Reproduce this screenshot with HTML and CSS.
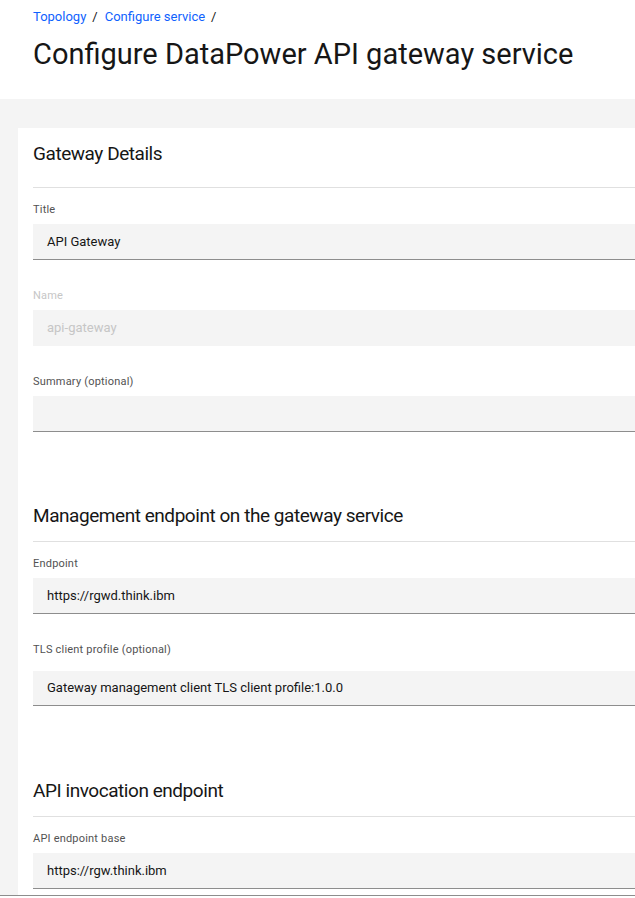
FILE: index.html
```html
<!DOCTYPE html>
<html lang="en">
<head>
<meta charset="utf-8">
<title>Configure DataPower API gateway service</title>
<link rel="stylesheet" href="styles.css">
</head>
<body>
<header class="page-header">
  <nav class="breadcrumb">
    <a class="crumb" href="#">Topology</a><span class="sep">/</span>
    <a class="crumb" href="#">Configure service</a><span class="sep">/</span>
  </nav>
  <h1 class="page-title">Configure DataPower API gateway service</h1>
</header>
<main class="content">
  <section class="card">
    <div class="section">
      <h2 class="section-title first">Gateway Details</h2>
      <div class="field">
        <label class="label">Title</label>
        <div class="input">API Gateway</div>
      </div>
      <div class="field">
        <label class="label disabled">Name</label>
        <div class="input disabled">api-gateway</div>
      </div>
      <div class="field">
        <label class="label">Summary (optional)</label>
        <div class="input"></div>
      </div>
    </div>
    <div class="section">
      <h2 class="section-title">Management endpoint on the gateway service</h2>
      <div class="field">
        <label class="label">Endpoint</label>
        <div class="input">https://rgwd.think.ibm</div>
      </div>
      <div class="field">
        <label class="label">TLS client profile (optional)</label>
        <div class="input select">Gateway management client TLS client profile:1.0.0</div>
      </div>
    </div>
    <div class="section">
      <h2 class="section-title">API invocation endpoint</h2>
      <div class="field">
        <label class="label">API endpoint base</label>
        <div class="input">https://rgw.think.ibm</div>
      </div>
    </div>
  </section>
</main>
<div class="footer-bar"></div>
</body>
</html>
```
FILE: styles.css
```css
* { box-sizing: border-box; }
html, body { margin: 0; padding: 0; }
body {
  font-family: Roboto, "Noto Sans", sans-serif;
  color: #161616;
  background: #f4f4f4;
  overflow: hidden;
  height: 898px;
}
.page-header {
  background: #ffffff;
  height: 99px;
  padding: 8px 0 0 33px;
}
.breadcrumb {
  display: flex;
  align-items: center;
  font-size: 13px;
  line-height: 18px;
}
.crumb { color: #0f62fe; text-decoration: none; }
.sep { color: #161616; margin: 0 7px 0 6px; }
.page-title {
  margin: 8px 0 0 0;
  font-size: 29px;
  line-height: 40px;
  font-weight: 400;
}
.content {
  padding: 29px 0 0 18px;
}
.card {
  background: #ffffff;
  padding: 12px 0 9px 15px;
}
.section + .section { margin-top: 70px; }
.section:last-child { margin-top: 71px; }
.section-title {
  margin: 0;
  font-size: 19px;
  letter-spacing: -0.45px;
  line-height: 28px;
  font-weight: 400;
  padding-bottom: 11px;
  border-bottom: 1px solid #e0e0e0;
  margin-bottom: 14px;
}
.section-title.first { padding-bottom: 19px; }
.field { margin-bottom: 28px; }
.section:last-child .field:last-child { margin-bottom: 0; }
.label {
  display: block;
  font-size: 11px;
  line-height: 16px;
  color: #525252;
  margin-bottom: 6px;
  letter-spacing: 0.2px;
}
.label.disabled { color: #c6c6c6; }
.input {
  height: 36px;
  background: #f4f4f4;
  border-bottom: 1px solid #8d8d8d;
  padding: 0 14px;
  font-size: 13px;
  line-height: 35px;
  color: #161616;
}
.input.disabled {
  color: #c6c6c6;
  border-bottom-color: transparent;
}
.input.select {
  margin-top: 13px;
  height: 35px;
  line-height: 34px;
}
.footer-bar {
  position: fixed;
  left: 0;
  right: 0;
  bottom: 0;
  height: 3px;
  border-top: 1px solid #8d8d8d;
  background: #ffffff;
}
```
